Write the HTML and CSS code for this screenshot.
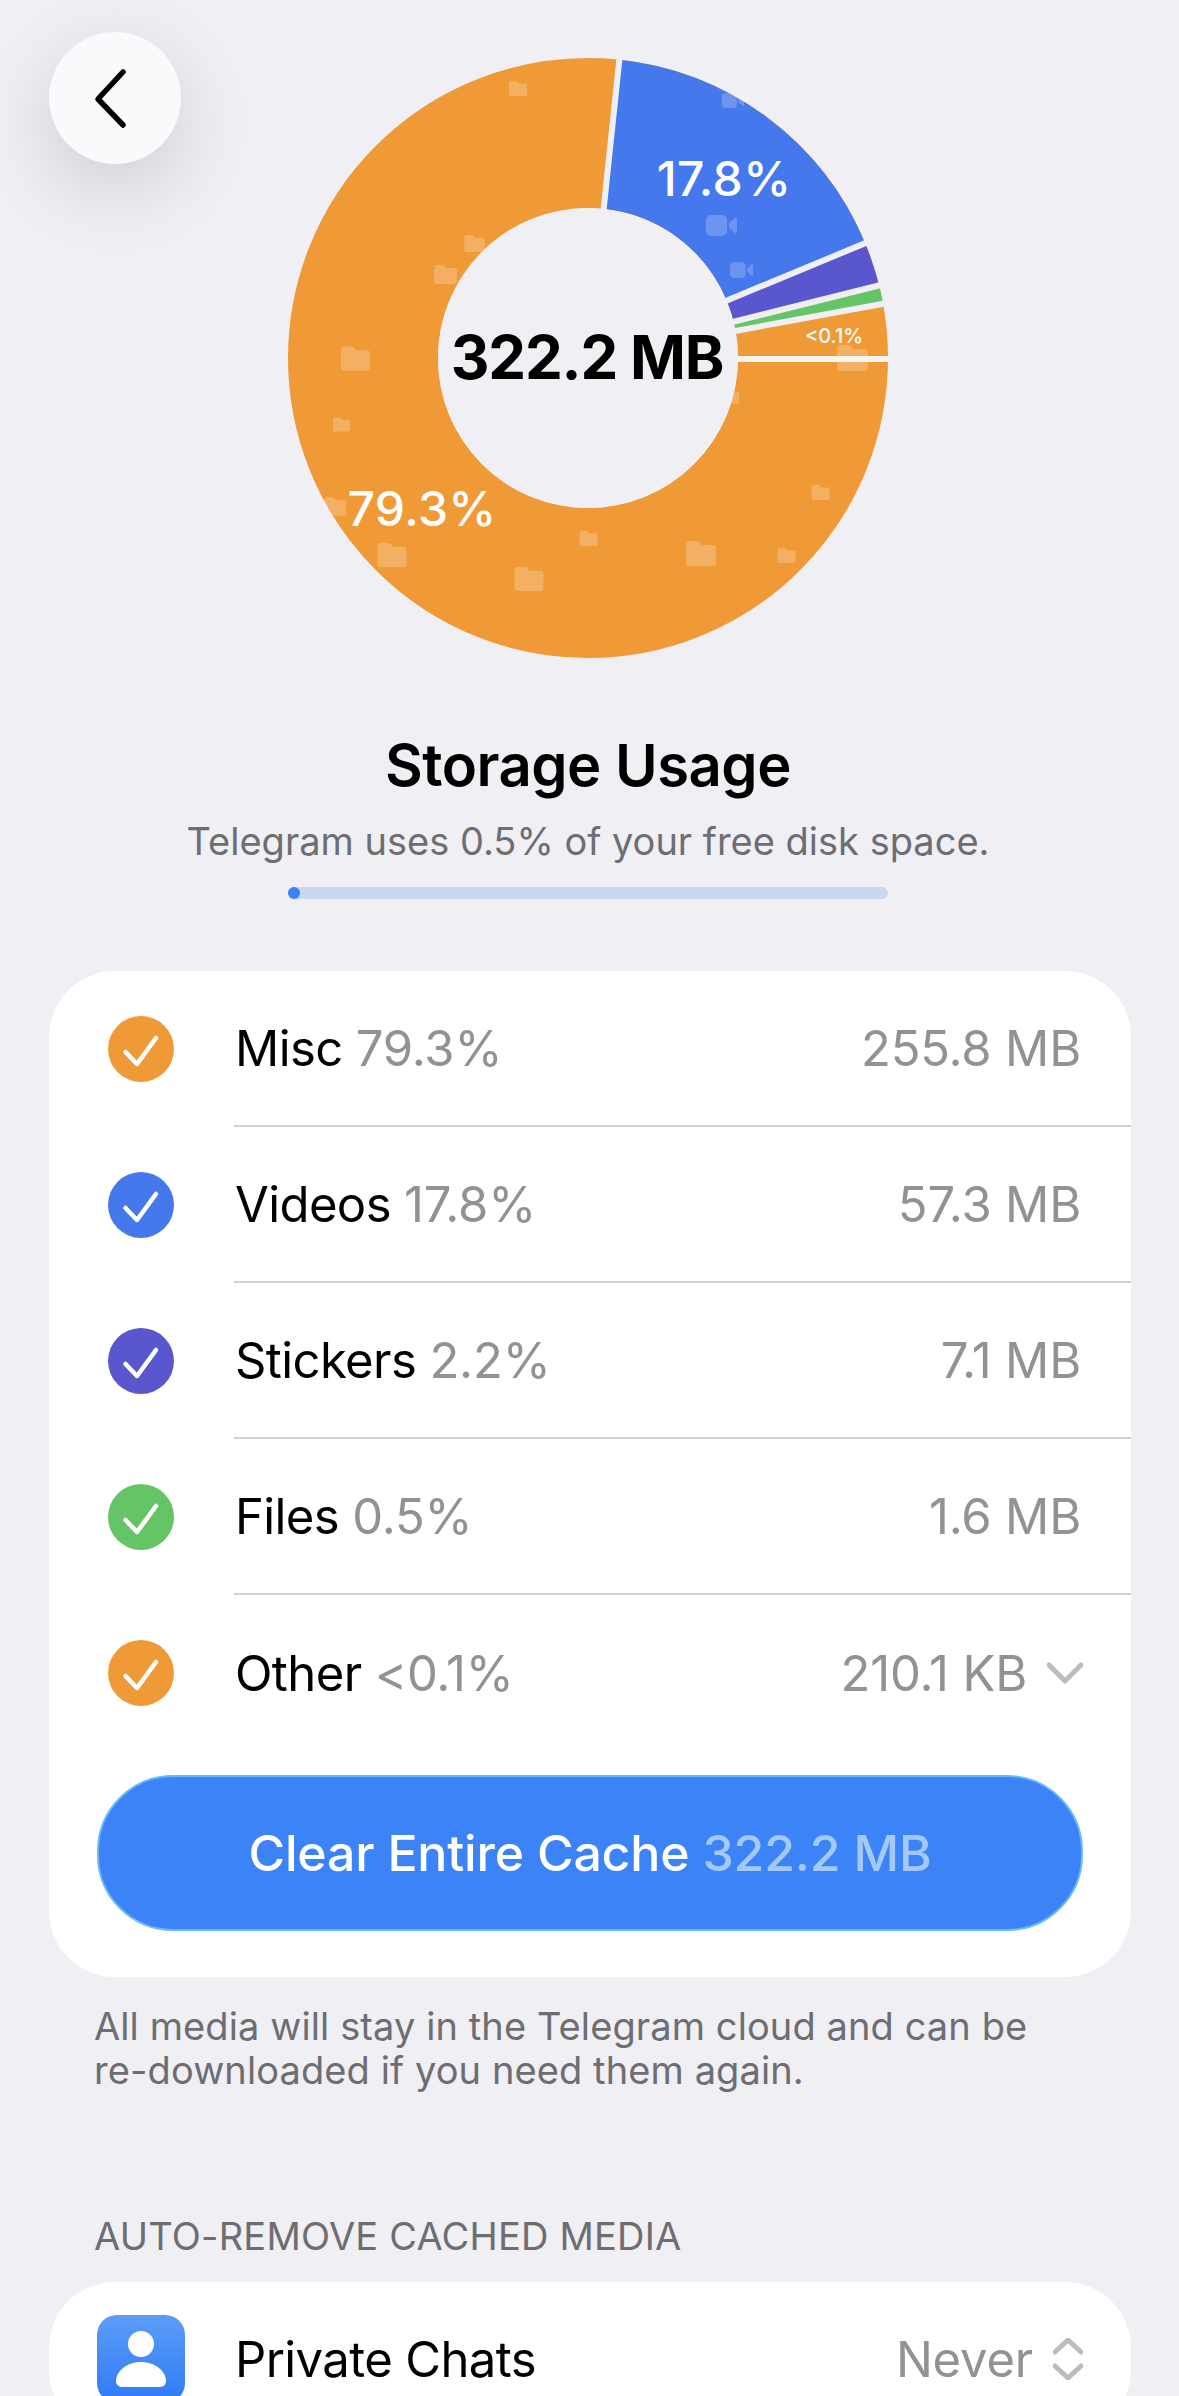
FILE: index.html
```html
<!DOCTYPE html>
<html lang="en">
<head>
  <meta charset="UTF-8" />
  <title>Storage Usage</title>
  <link rel="stylesheet" href="styles.css">
</head>
<body>
  <button class="back">
    <svg width="40" height="64" viewBox="0 0 40 64"><path d="M33 6 L8 33 L33 59" /></svg>
  </button>

  <section class="hero">
    <svg class="donut" width="620" height="620" viewBox="-310 -310 620 620">
      <defs>
        <symbol id="folder" viewBox="0 0 30 25">
          <path d="M3 0h8c1.500 0 2.500 .8 3.300 2l1.200 2h11.500c1.700 0 3 1.300 3 3v15c0 1.700-1.300 3-3 3h-24c-1.700 0-3-1.300-3-3v-19c0-1.700 1.300-3 3-3z" />
        </symbol>
        <symbol id="video" viewBox="0 0 31 21">
          <rect width="21" height="21" rx="5" />
          <path d="M23 8l6-5c.8-.6 2-.2 2 1v13c0 1.200-1.200 1.600-2 1l-6-5z" />
        </symbol>
      </defs>

      <circle class="ring ring-orange" r="225" pathLength="360" />
      <g transform="rotate(-90)">
        <circle class="ring ring-blue" r="225" pathLength="360" stroke-dasharray="61.5 360" transform="rotate(6)" />
        <circle class="ring ring-purple" r="225" pathLength="360" stroke-dasharray="9 360" transform="rotate(67.5)" />
        <circle class="ring ring-green" r="225" pathLength="360" stroke-dasharray="4 360" transform="rotate(76)" />
      </g>

      <g class="marks">
        <use href="#folder" x="-79" y="-277" width="18" height="15" />
        <use href="#folder" x="-124" y="-123" width="21" height="17" />
        <use href="#folder" x="-154" y="-93" width="23" height="19" />
        <use href="#folder" x="-247" y="-12" width="29" height="25" />
        <use href="#folder" x="-255" y="59" width="17" height="15" />
        <use href="#folder" x="-264" y="137" width="22" height="23" />
        <use href="#folder" x="-211" y="185" width="30" height="24" />
        <use href="#folder" x="-74" y="209" width="30" height="24" />
        <use href="#folder" x="-9" y="173" width="19" height="15" />
        <use href="#folder" x="98" y="183" width="30" height="25" />
        <use href="#folder" x="189" y="190" width="19" height="15" />
        <use href="#folder" x="223" y="127" width="19" height="15" />
        <use href="#folder" x="249" y="-13" width="31" height="26" />
        <use href="#folder" x="132" y="31" width="20" height="15" />
        <use href="#video" x="134" y="-266" width="22" height="17" />
        <use href="#video" x="118" y="-143" width="31" height="21" />
        <use href="#video" x="142" y="-96" width="23" height="16" />
      </g>

      <g class="gaps">
        <line x1="140" x2="310" transform="rotate(-84)" />
        <line x1="140" x2="310" transform="rotate(-22.500)" />
        <line x1="140" x2="310" transform="rotate(-14)" />
        <line x1="140" x2="310" transform="rotate(-10.400)" />
      </g>
      <line class="gap-light" x1="140" x2="300" y1="1" y2="1" />
      <circle class="hole" r="150" />

      <text class="pct" x="136" y="-162">17.8%</text>
      <text class="pct" x="-166" y="168">79.3%</text>
      <text class="pct pct-small" x="246" y="-15">&lt;0.1%</text>
      <text class="total" x="-1" y="21">322.2 MB</text>
    </svg>

    <h1>Storage Usage</h1>
    <p class="hero-sub">Telegram uses 0.5% of your free disk space.</p>
    <div class="usage-bar"><div class="usage-fill"></div></div>
  </section>

  <section class="card">
    <div class="row">
      <span class="check orange"><svg width="66" height="66" viewBox="0 0 66 66"><path d="M17.500 36 L29 48 L48 22" /></svg></span>
      <div class="row-body">
        <span class="name">Misc <em>79.3%</em></span>
        <span class="value">255.8 MB</span>
      </div>
    </div>
    <div class="row">
      <span class="check blue"><svg width="66" height="66" viewBox="0 0 66 66"><path d="M17.500 36 L29 48 L48 22" /></svg></span>
      <div class="row-body">
        <span class="name">Videos <em>17.8%</em></span>
        <span class="value">57.3 MB</span>
      </div>
    </div>
    <div class="row">
      <span class="check purple"><svg width="66" height="66" viewBox="0 0 66 66"><path d="M17.500 36 L29 48 L48 22" /></svg></span>
      <div class="row-body">
        <span class="name">Stickers <em>2.2%</em></span>
        <span class="value">7.1 MB</span>
      </div>
    </div>
    <div class="row">
      <span class="check green"><svg width="66" height="66" viewBox="0 0 66 66"><path d="M17.500 36 L29 48 L48 22" /></svg></span>
      <div class="row-body">
        <span class="name">Files <em>0.5%</em></span>
        <span class="value">1.6 MB</span>
      </div>
    </div>
    <div class="row row-last">
      <span class="check orange"><svg width="66" height="66" viewBox="0 0 66 66"><path d="M17.500 36 L29 48 L48 22" /></svg></span>
      <div class="row-body">
        <span class="name">Other <em>&lt;0.1%</em></span>
        <span class="value">210.1 KB</span>
        <svg class="chevron" width="36" height="22" viewBox="0 0 36 22"><path d="M2 3 L18 19 L34 3" /></svg>
      </div>
    </div>
    <button class="clear">Clear Entire Cache <span>322.2 MB</span></button>
  </section>

  <p class="note">All media will stay in the Telegram cloud and can be<br>re-downloaded if you need them again.</p>

  <h2 class="section-title">AUTO-REMOVE CACHED MEDIA</h2>

  <section class="card card-auto">
    <div class="row row-last row-auto">
      <span class="chat-icon">
        <svg width="88" height="88" viewBox="0 0 88 88">
          <ellipse cx="44" cy="29" rx="13" ry="13" />
          <path d="M44 47c-15 0-25 10-25 19 0 4 3 6 7 6h36c4 0 7-2 7-6 0-9-10-19-25-19z" />
        </svg>
      </span>
      <div class="row-body">
        <span class="name">Private Chats</span>
        <span class="value">Never</span>
        <svg class="updown" width="30" height="42" viewBox="0 0 30 42"><path d="M2 14 L15 2 L28 14 M2 28 L15 40 L28 28" /></svg>
      </div>
    </div>
  </section>
</body>
</html>
```

FILE: styles.css
```css
* {margin: 0; padding: 0; box-sizing: border-box;}
html, body {
  height: 2396px;
  overflow: hidden;
}
body {
  position: relative;
  font-family: Inter, 'Noto Sans', sans-serif;
  background: #efeff4;
  color: black;
}

/* back button floats over the chart */
.back {
  position: absolute;
  top: 32px;
  left: 49px;
  width: 132px;
  height: 132px;
  display: flex;
  align-items: center;
  justify-content: center;
  background: #f9fafc;
  border: none;
  border-radius: 50%;
  box-shadow: 0 24px 80px rgba(0, 0, 0, 0.14);
}
.back svg {
  margin-right: 10px;
}
.back path {
  fill: none;
  stroke: black;
  stroke-width: 5.500;
  stroke-linecap: round;
  stroke-linejoin: round;
}

.hero {
  display: flex;
  flex-direction: column;
  align-items: center;
  padding: 48px 3px 0 0;
}
.donut {
  display: block;
}
.ring {
  fill: none;
  stroke-width: 150;
}
.ring-orange {stroke: #f09a37;}
.ring-blue {stroke: #4478ec;}
.ring-purple {stroke: #5a56ce;}
.ring-green {stroke: #65c466;}
.marks {
  fill: rgba(255, 255, 255, 0.22);
}
.gaps line {
  stroke: #efeff4;
  stroke-width: 6;
}
.gap-light {
  stroke: #f7f5f0;
  stroke-width: 6;
}
.hole {
  fill: #efeff4;
}
.pct {
  fill: white;
  font-size: 48px;
  font-weight: 500;
  letter-spacing: 0.4px;
  text-anchor: middle;
}
.pct-small {
  font-size: 20px;
  letter-spacing: 0;
}
.total {
  font-size: 60px;
  font-weight: 700;
  letter-spacing: -1.2px;
  text-anchor: middle;
}

h1 {
  margin-top: 63px;
  font-size: 58px;
  line-height: 68px;
  font-weight: 600;
  letter-spacing: -0.5px;
}
.hero-sub {
  margin-top: 19px;
  font-size: 38px;
  line-height: 46px;
  color: #6d6d72;
}
.usage-bar {
  width: 600px;
  height: 12px;
  margin-top: 23px;
  background: #c6d9f1;
  border-radius: 6px;
}
.usage-fill {
  width: 12px;
  height: 12px;
  background: #3b82f6;
  border-radius: 50%;
}

.card {
  margin: 72px 48px 0 49px;
  padding-bottom: 46px;
  background: white;
  border-radius: 66px;
}
.row {
  display: flex;
  align-items: center;
  height: 156px;
  padding-left: 59px;
}
.check {
  flex: none;
  width: 66px;
  height: 66px;
  border-radius: 50%;
}
.check svg {
  display: block;
}
.check path {
  fill: none;
  stroke: white;
  stroke-width: 4.500;
  stroke-linecap: round;
  stroke-linejoin: round;
}
.orange {background: #f09a37;}
.blue {background: #4478ec;}
.purple {background: #5a56ce;}
.green {background: #65c466;}

.row-body {
  flex: 1;
  display: flex;
  align-items: center;
  height: 100%;
  margin-left: 60px;
  padding: 0 50px 0 1px;
  border-bottom: 2px solid #d1d1d4;
  font-size: 49px;
  letter-spacing: -0.6px;
}
.row-last .row-body {
  border-bottom: none;
}
.name {
  flex: 1;
}
.name em {
  font-style: normal;
  font-weight: 400;
  letter-spacing: -0.2px;
  color: #929296;
}
.value {
  font-weight: 400;
  letter-spacing: -0.2px;
  color: #929296;
}
.chevron {
  margin: 0 -2px 0 20px;
}
.chevron path, .updown path {
  fill: none;
  stroke: #bcbcbf;
  stroke-width: 5;
  stroke-linecap: round;
  stroke-linejoin: round;
}
.updown {
  margin: 0 -2px 0 20px;
}

.clear {
  display: block;
  width: 986px;
  height: 156px;
  margin: 24px 0 0 48px;
  background: #3b83f7;
  border: 2px solid #6ab8f9;
  border-radius: 76px;
  color: white;
  font-family: inherit;
  font-size: 50px;
  font-weight: 500;
  letter-spacing: -0.2px;
}
.clear span {
  color: #a3c9fb;
}

.note {
  margin: 27px 0 0 94px;
  font-size: 38px;
  line-height: 44px;
  letter-spacing: 0.1px;
  color: #6d6d72;
}
.section-title {
  margin: 122px 0 0 94px;
  font-size: 38px;
  line-height: 44px;
  letter-spacing: 0.2px;
  font-weight: 400;
  color: #6d6d72;
}

.card-auto {
  margin-top: 24px;
  padding-bottom: 0;
}
.row-auto {
  height: 154px;
  padding-left: 48px;
}
.row-auto .row-body {
  margin-left: 49px;
}
.chat-icon {
  flex: none;
  width: 88px;
  height: 88px;
  background: linear-gradient(#5c9df9, #2f7af6);
  border-radius: 20px;
}
.chat-icon svg {
  display: block;
  fill: white;
}
```
